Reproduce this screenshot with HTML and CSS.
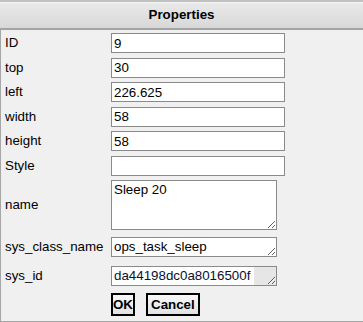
FILE: index.html
```html
<!DOCTYPE html>
<html lang="en">
<head>
<meta charset="UTF-8">
<title>Properties</title>
<link rel="stylesheet" href="styles.css">
</head>
<body>

<div class="dialog">
  <div class="dialog-title">Properties</div>

  <div class="props">
    <div class="row">
      <label class="lbl">ID</label>
      <input class="field" type="text" value="9">
    </div>
    <div class="row">
      <label class="lbl">top</label>
      <input class="field" type="text" value="30">
    </div>
    <div class="row">
      <label class="lbl">left</label>
      <input class="field" type="text" value="226.625">
    </div>
    <div class="row">
      <label class="lbl">width</label>
      <input class="field" type="text" value="58">
    </div>
    <div class="row">
      <label class="lbl">height</label>
      <input class="field" type="text" value="58">
    </div>
    <div class="row">
      <label class="lbl">Style</label>
      <input class="field" type="text" value="">
    </div>
    <div class="row row-name">
      <label class="lbl">name</label>
      <textarea class="area area-big">Sleep 20</textarea>
    </div>
    <div class="row row-class">
      <label class="lbl">sys_class_name</label>
      <textarea class="area area-line">ops_task_sleep</textarea>
    </div>
    <div class="row row-id">
      <label class="lbl">sys_id</label>
      <textarea class="area area-line area-id">da44198dc0a8016500f</textarea>
    </div>
    <div class="buttons">
      <button class="btn btn-ok">OK</button>
      <button class="btn btn-cancel">Cancel</button>
    </div>
  </div>
</div>

</body>
</html>
```

FILE: styles.css
```css
html, body {
  margin: 0;
  height: 100%;
  background-color: #f0f0f0;
}
.dialog {
  box-sizing: border-box;
  width: 363px;
  height: 322px;
  background-color: #f0f0f0;
  border-left: 1px solid #a6a6a6;
  border-bottom: 1px solid #a6a6a6;
  font-family: "Liberation Sans", Arial, sans-serif;
  font-size: 13.33px;
  color: #000;
}
.dialog-title {
  box-sizing: border-box;
  height: 30px;
  margin-left: -1px;
  border-top: 2px solid #c2c2c2;
  border-bottom: 2px solid #a4a4a4;
  background: linear-gradient(#f6f6f6 0, #e8e8e8 2px, #d8d8d8 100%);
  font-weight: bold;
  text-align: center;
  line-height: 25px;
}
.props {
  padding-top: 3px;
}
.row {
  display: flex;
  align-items: flex-start;
  height: 24.5px;
}
.lbl {
  width: 106px;
  padding-left: 4px;
  line-height: 20px;
  flex-shrink: 0;
}
.field {
  box-sizing: border-box;
  width: 174px;
  height: 20px;
  margin: 0;
  padding: 1px 2px;
  border: 1px solid #8a8a8a;
  background: #fff;
  font: inherit;
  color: #000;
  outline: none;
}
.row-name {
  height: 57px;
  align-items: center;
}
.row-name .lbl {
  margin-top: -7px;
}
.row-class {
  height: 29px;
}
.row-id {
  height: 27px;
}
.area {
  box-sizing: border-box;
  width: 166px;
  margin: 0;
  padding: 1px 2px;
  border: 1px solid #8a8a8a;
  background: #fff;
  font: inherit;
  color: #000;
  outline: none;
  overflow: hidden;
}
.area-big {
  height: 50px;
}
.row-name .area-big {
  align-self: flex-start;
}
.area-line {
  height: 20px;
  white-space: nowrap;
}
.area-id {
  color: #08102e;
  background: linear-gradient(to right, #fff 0, #fff 142px, #e6e6e6 142px);
}
.buttons {
  display: flex;
  gap: 11px;
  padding-left: 110px;
}
.btn {
  height: 23px;
  margin: 0;
  padding: 0 1px;
  border: 2px solid #000;
  background: linear-gradient(#f8f8f8, #e2e2e2);
  font-family: "Liberation Sans", Arial, sans-serif;
  font-size: 13.33px;
  font-weight: bold;
  color: #000;
  cursor: pointer;
}
.btn-ok {
  padding: 0;
}
.btn-cancel {
  padding: 0 3px;
}
```
